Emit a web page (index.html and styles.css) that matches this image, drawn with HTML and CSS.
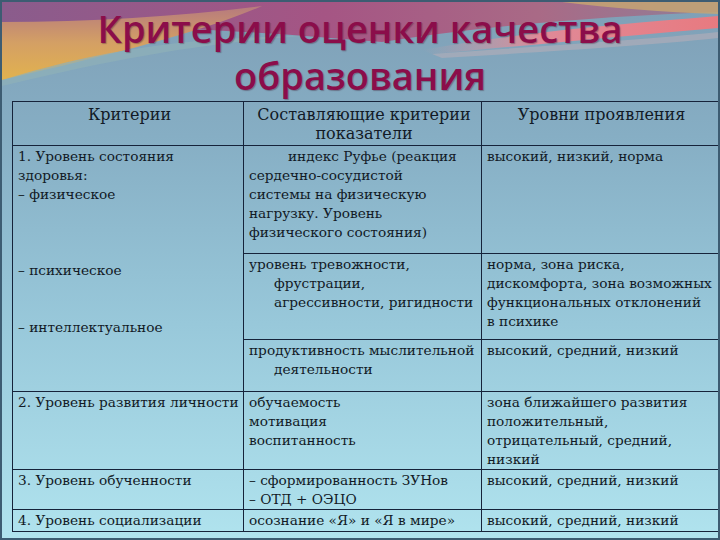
FILE: index.html
```html
<!DOCTYPE html>
<html lang="ru">
<head>
<meta charset="utf-8">
<title>Критерии оценки качества образования</title>
<link rel="stylesheet" href="styles.css">
</head>
<body>
<div class="slide">
  <svg class="bg" width="716" height="536" viewBox="0 0 716 536" aria-hidden="true">
    <defs>
      <linearGradient id="base" x1="0" y1="0" x2="0" y2="1">
        <stop offset="0" stop-color="#7f9fb6"/>
        <stop offset="0.25" stop-color="#86aec4"/>
        <stop offset="0.6" stop-color="#98c8da"/>
        <stop offset="1" stop-color="#b0e3ee"/>
      </linearGradient>
      <linearGradient id="topband" x1="0" y1="0" x2="1" y2="0">
        <stop offset="0" stop-color="#8a5c8c"/>
        <stop offset="0.45" stop-color="#a55584"/>
        <stop offset="0.75" stop-color="#a96a86"/>
        <stop offset="1" stop-color="#8f7f98"/>
      </linearGradient>
      <linearGradient id="yellow" x1="0" y1="0" x2="0" y2="1">
        <stop offset="0" stop-color="#b67a7e"/>
        <stop offset="0.5" stop-color="#d4a064"/>
        <stop offset="1" stop-color="#e2b24e"/>
      </linearGradient>
      <linearGradient id="pink" x1="0" y1="0" x2="1" y2="0">
        <stop offset="0" stop-color="#c9a0a8" stop-opacity="0"/>
        <stop offset="0.4" stop-color="#e08a98"/>
        <stop offset="1" stop-color="#e87a80"/>
      </linearGradient>
    </defs>
    <rect width="716" height="536" fill="url(#base)"/>
    <path d="M0 0 H716 V10 C600 14 480 24 380 40 C260 30 150 22 0 26 Z" fill="url(#topband)"/>
    <path d="M0 20 C90 20 180 14 260 4 C200 30 120 50 0 78 Z" fill="url(#yellow)"/>
    <path d="M0 78 C100 48 180 36 300 34 C190 42 100 60 0 84 Z" fill="#8fb0b8" opacity="0.7"/>
    <path d="M420 48 C520 30 620 22 716 14 V26 C620 34 520 44 430 52 Z" fill="url(#pink)"/>
    <path d="M560 0 H716 V12 C660 10 610 6 560 0 Z" fill="#c8a870" opacity="0.8"/>
    <path d="M430 52 C540 44 640 38 716 30 V36 C640 44 540 50 440 56 Z" fill="#c0b0b8" opacity="0.5"/>
  </svg>
  <div class="content">
    <h1 class="title">Критерии оценки качества<br>образования</h1>
    <table class="grid">
      <colgroup>
        <col class="c1"><col class="c2"><col class="c3">
      </colgroup>
      <tr class="h-head">
        <th>Критерии</th>
        <th>Составляющие критерии<br>показатели</th>
        <th>Уровни проявления</th>
      </tr>
      <tr class="h-a">
        <td rowspan="3">1. Уровень состояния<br>здоровья:<br>– физическое<br><br><br><br>– психическое<br><br><br>– интеллектуальное</td>
        <td class="indent">индекс Руфье (реакция<br>сердечно-сосудистой<br>системы на физическую<br>нагрузку. Уровень<br>физического состояния)</td>
        <td>высокий, низкий, норма</td>
      </tr>
      <tr class="h-b">
        <td class="hang">уровень тревожности,<br>фрустрации,<br>агрессивности, ригидности</td>
        <td>норма, зона риска,<br>дискомфорта, зона возможных<br>функциональных отклонений<br>в психике</td>
      </tr>
      <tr class="h-c">
        <td class="hang">продуктивность мыслительной<br>деятельности</td>
        <td>высокий, средний, низкий</td>
      </tr>
      <tr class="h-2">
        <td>2. Уровень развития личности</td>
        <td>обучаемость<br>мотивация<br>воспитанность</td>
        <td>зона ближайшего развития<br>положительный,<br>отрицательный, средний,<br>низкий</td>
      </tr>
      <tr class="h-3">
        <td>3. Уровень обученности</td>
        <td>– сформированность ЗУНов<br>– ОТД + ОЭЦО</td>
        <td>высокий, средний, низкий</td>
      </tr>
      <tr class="h-4">
        <td>4. Уровень социализации</td>
        <td>осознание «Я» и «Я в мире»</td>
        <td>высокий, средний, низкий</td>
      </tr>
    </table>
  </div>
</div>
</body>
</html>
```

FILE: styles.css
```css
html, body {
  margin: 0;
  padding: 0;
}
body {
  width: 720px;
  height: 540px;
  overflow: hidden;
  background: #3c5b70;
}
.slide {
  position: relative;
  width: 720px;
  height: 540px;
  box-sizing: border-box;
  border: 2px solid #3d5c72;
  overflow: hidden;
}
.bg {
  position: absolute;
  left: 0;
  top: 0;
  z-index: 0;
}
.content {
  position: relative;
  z-index: 1;
  display: flex;
  flex-direction: column;
}
.title {
  margin: 0;
  height: 99px;
  box-sizing: border-box;
  padding-top: 3px;
  text-align: center;
  font-family: "Open Sans", "Noto Sans", sans-serif;
  font-weight: 600;
  font-size: 38px;
  line-height: 47px;
  color: #8b0d4a;
  text-shadow: 1px 1px 1px rgba(60, 20, 40, 0.35);
}
.grid {
  margin-left: 10px;
  width: 706px;
  border-collapse: collapse;
  table-layout: fixed;
  font-family: "DejaVu Serif", serif;
  font-size: 13.7px;
  line-height: 19px;
  color: #121a26;
}
.c1 { width: 231px; }
.c2 { width: 238px; }
.c3 { width: 237px; }
.grid th,
.grid td {
  border: 1px solid #16233a;
  vertical-align: top;
  text-align: left;
  padding: 1px 2px 0 5px;
  white-space: nowrap;
}
.grid th {
  font-weight: normal;
  text-align: center;
  font-size: 16px;
  padding-top: 3px;
}
.indent {
  text-indent: 39px;
}
.hang {
  padding-left: 30px !important;
  text-indent: -25px;
}
.h-head { height: 44px; }
.h-a { height: 108px; }
.h-b { height: 86px; }
.h-c { height: 52px; }
.h-2 { height: 77px; }
.h-3 { height: 39px; }
.h-4 { height: 22px; }
```
